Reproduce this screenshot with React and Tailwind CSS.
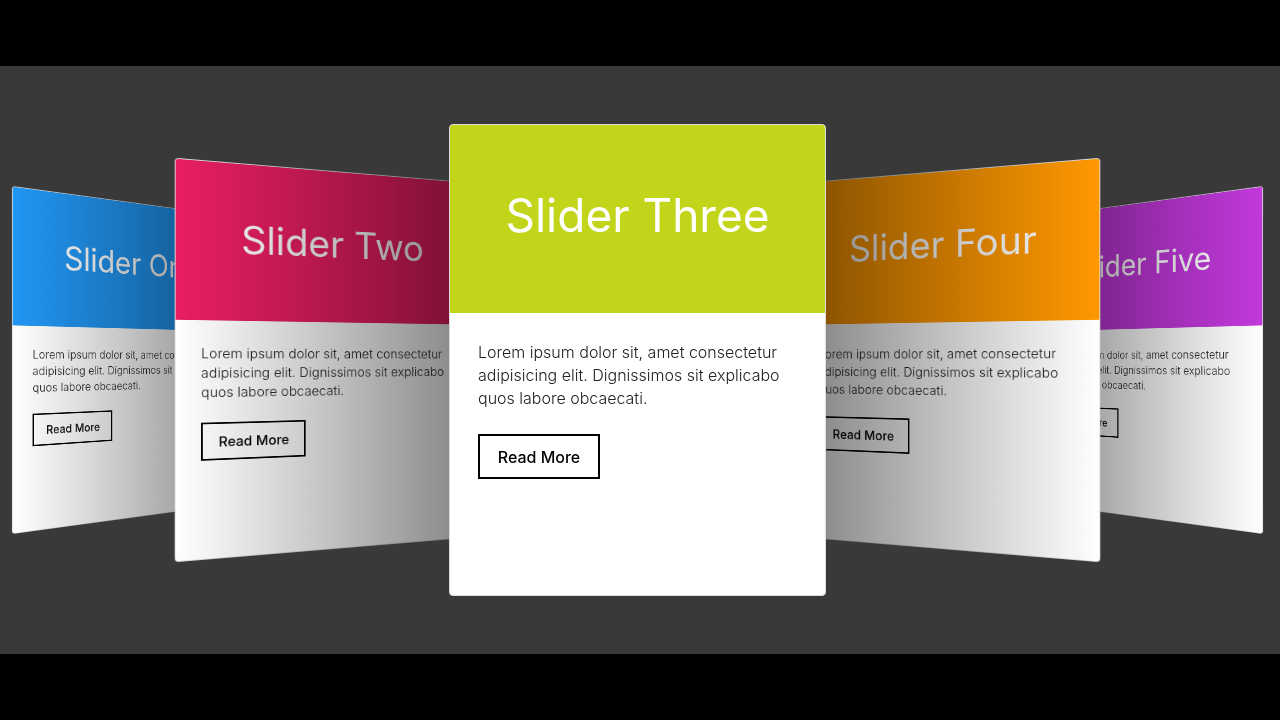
const slides = [
  {
    title: "Slider One",
    header: "bg-[#2196f3]",
    pose: "z-10 [transform:translateZ(-567px)_rotateY(60deg)]",
    shade: "bg-linear-to-l from-black/50 to-transparent",
  },
  {
    title: "Slider Two",
    header: "bg-[#e91e63]",
    pose: "z-20 [transform:translateZ(-284px)_rotateY(30deg)]",
    shade: "bg-linear-to-l from-black/50 to-transparent",
  },
  {
    title: "Slider Three",
    header: "bg-[#c3d51b]",
    pose: "z-30",
    shade: "hidden",
  },
  {
    title: "Slider Four",
    header: "bg-[#ff9800]",
    pose: "z-20 [transform:translateZ(-284px)_rotateY(-30deg)]",
    shade: "bg-linear-to-r from-black/50 to-transparent",
  },
  {
    title: "Slider Five",
    header: "bg-[#c238dc]",
    pose: "z-10 [transform:translateZ(-567px)_rotateY(-60deg)]",
    shade: "bg-linear-to-r from-black/50 to-transparent",
  },
];

function Slide({ title, header, pose, shade }) {
  return (
    <article
      className={`relative h-[472px] w-[377px] shrink-0 rounded border border-[#dddddd] bg-white ${pose}`}
    >
      <header className={`flex h-[188px] items-center justify-center rounded-t-[3px] pb-2 ${header}`}>
        <h2 className="text-[46px] leading-none text-white">{title}</h2>
      </header>
      <div className="flex flex-col items-start gap-6 px-7 py-7">
        <p className="text-[16px] leading-[23px] font-light whitespace-nowrap text-[#222222]">
          Lorem ipsum dolor sit, amet consectetur
          <br />
          adipisicing elit. Dignissimos sit explicabo
          <br />
          quos labore obcaecati.
        </p>
        <a
          href="#"
          className="flex h-[45px] w-[122px] items-center justify-center border-2 border-black text-[16px] font-medium text-black"
        >
          Read More
        </a>
      </div>
      <div className={`pointer-events-none absolute -inset-px rounded ${shade}`} />
    </article>
  );
}

export default function App() {
  return (
    <div className="flex min-h-screen flex-col justify-center bg-black font-['Inter',sans-serif]">
      <main className="bg-[#393939] pr-[5px]">
        <section
          aria-label="Slides"
          className="flex justify-center overflow-hidden py-[58px] [perspective:1134px]"
        >
          {slides.map((slide) => (
            <Slide key={slide.title} {...slide} />
          ))}
        </section>
      </main>
    </div>
  );
}
